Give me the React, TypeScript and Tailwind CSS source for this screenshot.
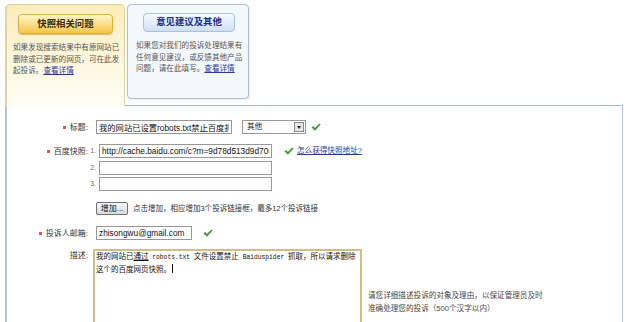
import type { ReactNode } from "react";

const fontStack = "font-['Liberation_Sans','Noto_Sans_CJK_SC',sans-serif]";

function Check({ className = "" }: { className?: string }) {
  return (
    <svg className={`shrink-0 ${className}`} width="10" height="8" viewBox="0 0 10 8">
      <path d="M0.4 4.3 L2.3 3 L3.8 5 L8.4 0.4 L9.7 1.6 L3.9 7.7 Z" fill="#3d9b38" />
    </svg>
  );
}

function Label({ text, required, top }: { text?: string; required?: boolean; top?: boolean }) {
  return (
    <div className={`flex w-[82px] shrink-0 justify-end pr-[1px] text-[8px] leading-[11px] text-[#333] ${top ? "items-start pt-[1px]" : "items-center"}`}>
      {required ? <span className="mr-[4px] h-[3px] w-[3px] bg-[#e5534b]" /> : null}
      {text ? <span>{text}:</span> : null}
    </div>
  );
}

function Row({ children, className = "" }: { children: ReactNode; className?: string }) {
  return <div className={`flex items-center ${className}`}>{children}</div>;
}

function TextInput({ value, className = "" }: { value: string; className?: string }) {
  return (
    <input
      readOnly
      value={value}
      className={`h-[14px] border border-[#989898] bg-white px-[2px] py-0 text-[8.3px] text-[#111] outline-none ${fontStack} ${className}`}
    />
  );
}

function Num({ n }: { n: string }) {
  return <span className="w-[7px] shrink-0 text-right text-[6.5px] leading-[14px] text-[#666]">{n}</span>;
}

function TabLink() {
  return <a className="text-[#2a3a9c] underline" href="#">查看详情</a>;
}

export default function App() {
  return (
    <div className={`h-[322px] overflow-hidden bg-white pl-[5px] pt-[4px] ${fontStack}`}>
      <div className="w-[618px]">
        <div className="flex">
          <div className="h-[102px] w-[120px] shrink-0 rounded-t-[5px] border-l-2 border-r border-t border-[#e4d29c] bg-linear-to-b from-[#fcecb9] via-[#fdf6dc] to-[#fffdf5]">
            <div className="ml-[11px] mt-[9px] flex h-[20px] w-[95px] items-center justify-center rounded-[4px] border border-[#dfb040] bg-linear-to-b from-[#fff6c6] to-[#f6c641] text-[9.4px] font-bold text-[#3b2c05] shadow-[0_1px_1px_rgba(150,110,0,0.4)]">
              快照相关问题
            </div>
            <p className="mt-[8px] whitespace-nowrap pl-[6px] text-[7.6px] leading-[11.5px] text-[#555]">
              如果发现搜索结果中有原网站已<br />
              删除或已更新的网页，可在此发<br />
              起投诉。<TabLink />
            </p>
          </div>
          <div className="flex h-[102px] flex-1 flex-col border-b border-[#a4b8cc]">
            <div className="ml-[2px] h-[95px] w-[122px] rounded-[4px] border border-[#aebdd0] bg-[#f3f8fd] shadow-[1px_1px_2px_rgba(0,0,0,0.08)]">
              <div className="ml-[15px] mt-[8px] flex h-[19px] w-[92px] items-center justify-center rounded-[4px] border border-[#a9c1dc] bg-linear-to-b from-[#f5faff] to-[#cfe0f2] text-[9.4px] font-bold text-[#1d2d8f]">
                意见建议及其他
              </div>
              <p className="mt-[8px] whitespace-nowrap pl-[8px] text-[7.6px] leading-[11.5px] text-[#555]">
                如果您对我们的投诉处理结果有<br />
                任何意见建议，或反馈其他产品<br />
                问题，请在此填写。<TabLink />
              </p>
            </div>
          </div>
        </div>

        <div className="flex h-[240px] flex-col border-l-2 border-r border-[#b3c7db] pt-[14px]">
          <Row>
            <Label text="标题" required />
            <TextInput value="我的网站已设置robots.txt禁止百度抓取" className="ml-[7px] w-[136px]" />
            <div className="ml-[10px] flex h-[14px] w-[64px] items-center justify-between border border-[#989898] bg-white">
              <span className="pl-[4px] text-[7.6px] text-[#222]">其他</span>
              <span className="mr-[1px] flex h-[10px] w-[10px] items-center justify-center border border-[#8a8a8a] bg-[#e6e6e6]">
                <span className="h-0 w-0 border-x-[2.5px] border-t-[3px] border-x-transparent border-t-[#222]" />
              </span>
            </div>
            <Check className="ml-[5px]" />
          </Row>

          <Row className="mt-[10px]">
            <Label text="百度快照" required />
            <Num n="1." />
            <TextInput value="http://cache.baidu.com/c?m=9d78d513d9d706" className="ml-[3px] w-[173px]" />
            <Check className="ml-[12px]" />
            <a className="ml-[3px] text-[7.6px] text-[#2a3a9c] underline" href="#">怎么获得快照地址?</a>
          </Row>
          <Row className="mt-[3px]">
            <Label />
            <Num n="2." />
            <TextInput value="" className="ml-[3px] w-[173px]" />
          </Row>
          <Row className="mt-[2px]">
            <Label />
            <Num n="3." />
            <TextInput value="" className="ml-[3px] w-[173px]" />
          </Row>

          <Row className="mt-[11px]">
            <Label />
            <button className="ml-[7px] flex h-[13px] w-[32px] items-center justify-center rounded-[2px] border border-[#6f6f6f] bg-linear-to-b from-[#fbfbfb] to-[#dadada] text-[8px] text-[#111]">
              增加...
            </button>
            <span className="ml-[5px] text-[7.5px] text-[#333]">点击增加，相应增加3个投诉链接框，最多12个投诉链接</span>
          </Row>

          <Row className="mt-[11px]">
            <Label text="投诉人邮箱" required />
            <TextInput value="zhisongwu@gmail.com" className="ml-[7px] w-[96px]" />
            <Check className="ml-[11px]" />
          </Row>

          <div className="mt-[9px] flex items-start">
            <Label text="描述" top />
            <div className="ml-[4px] h-[110px] w-[269px] shrink-0 border-2 border-[#d2bd84] bg-white px-[1px] text-[7.5px] leading-[11px] text-[#111]">
              我的网站已<span className="underline">通过</span>
              <span className="font-['Liberation_Mono',monospace] text-[6.3px]"> robots.txt </span>
              文件设置禁止
              <span className="font-['Liberation_Mono',monospace] text-[6.3px]"> Baiduspider </span>
              抓取，所以请求删除
              <br />
              这个的百度网页快照。<span className="ml-[1px] inline-block h-[9px] w-px translate-y-[1px] bg-[#111]" />
            </div>
            <p className="ml-[6px] mt-[40px] whitespace-nowrap text-[7.6px] leading-[13px] text-[#444]">
              请您详细描述投诉的对象及理由，以保证管理员及时<br />
              准确处理您的投诉（500个汉字以内）
            </p>
          </div>
        </div>
      </div>
    </div>
  );
}
